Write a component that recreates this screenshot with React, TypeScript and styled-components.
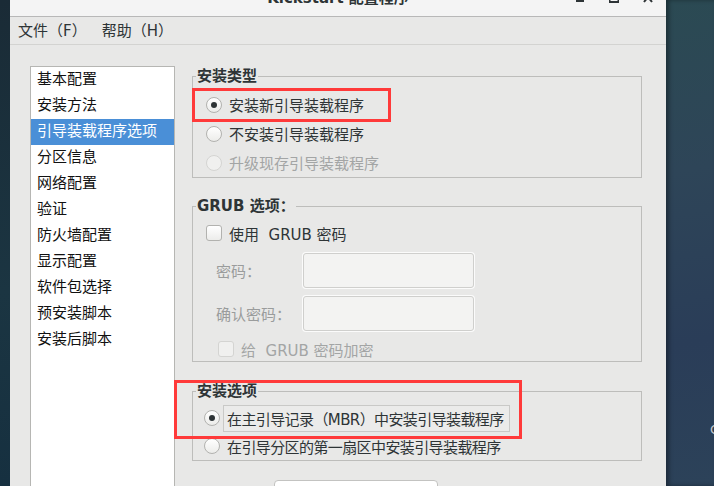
import styled, { createGlobalStyle } from "styled-components";

const GlobalStyle = createGlobalStyle`
  html, body {
    margin: 0;
    padding: 0;
  }
  body {
    width: 714px;
    height: 486px;
    overflow: hidden;
    font-family: "DejaVu Sans", "Noto Sans CJK SC", sans-serif;
    font-size: 15px;
    color: #2e3436;
  }
  * {
    box-sizing: border-box;
  }
`;

const Desktop = styled.div`
  display: flex;
  width: 714px;
  height: 486px;
  background: #1c3140;
`;

const LeftEdge = styled.div`
  width: 10px;
  background: linear-gradient(180deg, #1a2b36 0%, #1b3542 60%, #163040 100%);
`;

const DesktopRight = styled.div`
  flex: 1;
  padding: 422px 0 0 44px;
  background: linear-gradient(
    170deg,
    #2b4a53 0%,
    #2e4558 35%,
    #2a3d58 70%,
    #2c4259 100%
  );
  box-shadow: inset 3px 0 4px rgba(0, 0, 0, 0.35);
  color: #c4c8cc;
  font-size: 13px;
  white-space: nowrap;
  overflow: hidden;
`;

const Window = styled.div`
  width: 656px;
  display: flex;
  flex-direction: column;
  background: #e8e8e7;
`;

const TitleBar = styled.div`
  height: 17px;
  display: grid;
  grid-template-columns: 1fr auto 1fr;
  background: #f4f4f4;
  border-bottom: 1px solid #b8b8b8;
  overflow: hidden;
`;

const Title = styled.div`
  grid-column: 2;
  margin-top: -12px;
  line-height: 20px;
  font-weight: bold;
  color: #2e3436;
`;

const Controls = styled.div`
  justify-self: end;
  display: flex;
  gap: 24px;
  padding-right: 13px;
  margin-top: -9px;
`;

const MenuBar = styled.div`
  height: 28px;
  display: flex;
  align-items: center;
  gap: 15px;
  padding: 1px 0 0 8px;
  border-bottom: 1px solid #d3d3d1;
`;

const MenuItem = styled.span`
  line-height: 20px;
`;

const Body = styled.div`
  flex: 1;
  display: flex;
  gap: 17px;
  padding: 21px 24px 0 20px;
  overflow: hidden;
`;

const SideList = styled.ul`
  width: 145px;
  margin: 0;
  padding: 0;
  list-style: none;
  background: #fff;
  border: 1px solid #b6b6b3;
  border-bottom: none;
`;

const SideItem = styled.li<{ $selected?: boolean }>`
  height: 26px;
  line-height: 24px;
  padding-left: 6px;
  white-space: nowrap;
  background: ${(p) => (p.$selected ? "#4a8fd7" : "transparent")};
  color: ${(p) => (p.$selected ? "#fff" : "#111")};
`;

const Main = styled.div`
  position: relative;
  width: 450px;
  display: flex;
  flex-direction: column;
`;

const Frame = styled.fieldset<{ $gap?: number }>`
  margin: ${(p) => p.$gap ?? 0}px 0 0 0;
  padding: 0;
  min-width: 0;
  border: 1px solid #bdbdbb;
`;

const Legend = styled.legend`
  margin-left: 3px;
  padding: 0 1px;
  line-height: 20px;
  font-weight: bold;
  color: #2e3436;
`;

const FrameBody = styled.div<{ $top: number; $left: number }>`
  display: flex;
  flex-direction: column;
  padding: ${(p) => p.$top}px 0 0 ${(p) => p.$left}px;
`;

const OptionRow = styled.div<{
  $height?: number;
  $indent?: number;
  $disabled?: boolean;
  $tight?: boolean;
}>`
  height: ${(p) => p.$height ?? 29}px;
  display: flex;
  align-items: center;
  gap: 7px;
  padding-left: ${(p) => p.$indent ?? 0}px;
  color: ${(p) => (p.$disabled ? "#a3a5a5" : "#2e3436")};
  letter-spacing: ${(p) => (p.$tight ? "-0.6px" : "normal")};
  white-space: nowrap;
`;

const Radio = styled.span<{ $checked?: boolean; $disabled?: boolean }>`
  width: 16px;
  height: 16px;
  flex: none;
  border-radius: 50%;
  border: 1px solid ${(p) => (p.$disabled ? "#d4d4d2" : "#b2b2af")};
  background: ${(p) =>
    p.$disabled
      ? "#f0f0ef"
      : "linear-gradient(180deg, #ffffff 0%, #ececea 100%)"};
  display: flex;
  align-items: center;
  justify-content: center;
  &::after {
    content: "";
    display: ${(p) => (p.$checked ? "block" : "none")};
    width: 6px;
    height: 6px;
    border-radius: 50%;
    background: #2e3436;
  }
`;

const Check = styled.span<{ $disabled?: boolean }>`
  width: 16px;
  height: 16px;
  flex: none;
  border-radius: 3px;
  border: 1px solid ${(p) => (p.$disabled ? "#d4d4d2" : "#b2b2af")};
  background: ${(p) =>
    p.$disabled
      ? "#f0f0ef"
      : "linear-gradient(180deg, #ffffff 0%, #ececea 100%)"};
`;

const FocusLabel = styled.span`
  padding: 2px 5px 2px 3px;
  margin-left: -4px;
  border: 1px solid #c9c9c7;
  background: #ebebea;
`;

const PasswordGrid = styled.div`
  display: grid;
  grid-template-columns: 87px 171px;
  row-gap: 8px;
  align-items: center;
  margin-top: 6px;
  padding-left: 10px;
`;

const FieldLabel = styled.label`
  color: #9a9c9c;
`;

const Field = styled.input`
  width: 171px;
  height: 35px;
  margin: 0;
  border: 1px solid #cfcfcd;
  border-radius: 3px;
  background: #f3f3f2;
  box-shadow: 0 0 0 1px #fbfbfb;
`;

const Bottom = styled.div`
  margin-top: 19px;
  padding-left: 82px;
`;

const BottomButton = styled.div`
  width: 164px;
  height: 30px;
  background: #fff;
  border: 1px solid #c3c3c1;
  border-radius: 4px;
`;

const Highlight = styled.div<{ $x: number; $y: number; $w: number; $h: number }>`
  position: absolute;
  left: ${(p) => p.$x}px;
  top: ${(p) => p.$y}px;
  width: ${(p) => p.$w}px;
  height: ${(p) => p.$h}px;
  border: 3px solid #ff3a3a;
  pointer-events: none;
`;

const menuItems = [
  "基本配置",
  "安装方法",
  "引导装载程序选项",
  "分区信息",
  "网络配置",
  "验证",
  "防火墙配置",
  "显示配置",
  "软件包选择",
  "预安装脚本",
  "安装后脚本",
];

export default function App() {
  return (
    <>
      <GlobalStyle />
      <Desktop>
        <LeftEdge />
        <Window>
          <TitleBar>
            <Title>Kickstart 配置程序</Title>
            <Controls>
              <svg width="10" height="12" viewBox="0 0 10 12">
                <rect x="1" y="9" width="8" height="2" fill="#2e3436" />
              </svg>
              <svg width="10" height="12" viewBox="0 0 10 12">
                <rect x="0.5" y="1.5" width="9" height="9.5" fill="none" stroke="#2e3436" strokeWidth="2" />
              </svg>
              <svg width="10" height="12" viewBox="0 0 10 12">
                <path d="M1 1 L9 11 M9 1 L1 11" stroke="#2e3436" strokeWidth="2" />
              </svg>
            </Controls>
          </TitleBar>
          <MenuBar>
            <MenuItem>文件（F）</MenuItem>
            <MenuItem>帮助（H）</MenuItem>
          </MenuBar>
          <Body>
            <SideList>
              {menuItems.map((item, i) => (
                <SideItem key={item} $selected={i === 2}>
                  {item}
                </SideItem>
              ))}
            </SideList>
            <Main>
              <Frame>
                <Legend>安装类型</Legend>
                <FrameBody $top={4} $left={13}>
                  <OptionRow>
                    <Radio $checked />
                    <span>安装新引导装载程序</span>
                  </OptionRow>
                  <OptionRow>
                    <Radio />
                    <span>不安装引导装载程序</span>
                  </OptionRow>
                  <OptionRow $disabled>
                    <Radio $disabled />
                    <span>升级现存引导装载程序</span>
                  </OptionRow>
                </FrameBody>
              </Frame>
              <Frame $gap={18}>
                <Legend>GRUB 选项：</Legend>
                <FrameBody $top={3} $left={13}>
                  <OptionRow $height={28}>
                    <Check />
                    <span>使用&nbsp; GRUB 密码</span>
                  </OptionRow>
                  <PasswordGrid>
                    <FieldLabel>密码：</FieldLabel>
                    <Field type="password" disabled />
                    <FieldLabel>确认密码：</FieldLabel>
                    <Field type="password" disabled />
                  </PasswordGrid>
                  <OptionRow $height={24} $indent={12} $disabled style={{ marginTop: 6 }}>
                    <Check $disabled />
                    <span>给&nbsp; GRUB 密码加密</span>
                  </OptionRow>
                </FrameBody>
              </Frame>
              <Frame $gap={19}>
                <Legend>安装选项</Legend>
                <FrameBody $top={3} $left={11}>
                  <OptionRow $height={28} $tight>
                    <Radio $checked />
                    <FocusLabel>在主引导记录（MBR）中安装引导装载程序</FocusLabel>
                  </OptionRow>
                  <OptionRow $height={28} $tight>
                    <Radio />
                    <span>在引导分区的第一扇区中安装引导装载程序</span>
                  </OptionRow>
                </FrameBody>
              </Frame>
              <Bottom>
                <BottomButton />
              </Bottom>
              <Highlight $x={0} $y={22} $w={199} $h={34} />
              <Highlight $x={-18} $y={314} $w={348} $h={59} />
            </Main>
          </Body>
        </Window>
        <DesktopRight>C</DesktopRight>
      </Desktop>
    </>
  );
}
